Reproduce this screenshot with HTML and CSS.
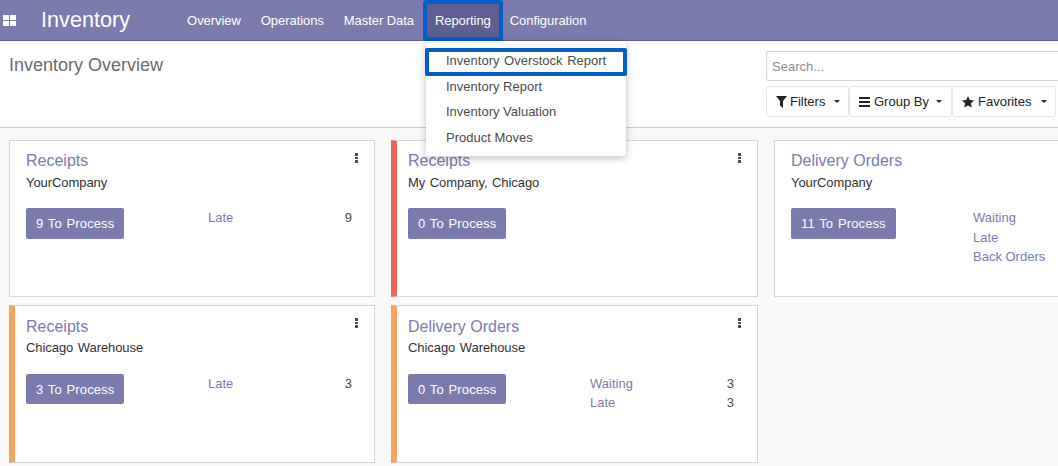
FILE: index.html
```html
<!DOCTYPE html>
<html lang="en">
<head>
  <meta charset="UTF-8">
  <title>Inventory Overview</title>
  <link rel="stylesheet" href="styles.css">
</head>
<body>
  <nav class="navbar">
    <svg class="apps-icon" width="13" height="11" viewBox="0 0 13 11"><path d="M0 0h6v5H0zM7 0h6v5H7zM0 6h6v5H0zM7 6h6v5H7z" fill="#fff"/></svg>
    <span class="brand">Inventory</span>
    <a class="nav-item">Overview</a>
    <a class="nav-item">Operations</a>
    <a class="nav-item">Master Data</a>
    <a class="nav-item nav-active">Reporting</a>
    <a class="nav-item">Configuration</a>
  </nav>

  <!-- Reporting menu -->
  <div class="dropdown">
    <a class="dropdown-item dropdown-marked">Inventory Overstock Report</a>
    <a class="dropdown-item">Inventory Report</a>
    <a class="dropdown-item">Inventory Valuation</a>
    <a class="dropdown-item">Product Moves</a>
  </div>

  <header class="control-panel">
    <h2 class="page-title">Inventory Overview</h2>
    <div class="search-side">
      <input class="search-input" type="text" placeholder="Search...">
      <div class="filter-row">
        <button class="filter-btn filter-filters">
          <svg width="12" height="12" viewBox="0 0 12 12"><path d="M0 0h11L7 5v7L4 9.500V5z" fill="#212529"/></svg>
          Filters <span class="caret"></span>
        </button>
        <button class="filter-btn filter-group">
          <svg width="12" height="10" viewBox="0 0 12 10"><path d="M0 0h11v2H0zM0 4h11v2H0zM0 8h11v2H0z" fill="#212529"/></svg>
          Group By <span class="caret"></span>
        </button>
        <button class="filter-btn filter-favorites">
          <svg width="12" height="12" viewBox="0 0 12 12"><path d="M6 0l1.800 3.900 4.200.5-3.100 2.900.8 4.200L6 9.400 2.300 11.500l.8-4.200L0 4.400l4.200-.5z" fill="#212529"/></svg>
          Favorites <span class="caret"></span>
        </button>
      </div>
    </div>
  </header>

  <main class="dashboard">
    <section class="card">
      <div class="card-head">
        <div class="card-title">Receipts</div>
        <span class="kebab"><i></i><i></i><i></i></span>
      </div>
      <div class="card-sub">YourCompany</div>
      <div class="card-body">
        <button class="process-btn">9 To Process</button>
        <div class="stats">
          <div class="stat"><a>Late</a><span>9</span></div>
        </div>
      </div>
    </section>

    <section class="card card-red">
      <div class="card-head">
        <div class="card-title">Receipts</div>
        <span class="kebab"><i></i><i></i><i></i></span>
      </div>
      <div class="card-sub">My Company, Chicago</div>
      <div class="card-body">
        <button class="process-btn">0 To Process</button>
      </div>
    </section>

    <section class="card">
      <div class="card-head">
        <div class="card-title">Delivery Orders</div>
      </div>
      <div class="card-sub">YourCompany</div>
      <div class="card-body">
        <button class="process-btn">11 To Process</button>
        <div class="stats">
          <div class="stat"><a>Waiting</a></div>
          <div class="stat"><a>Late</a></div>
          <div class="stat"><a>Back Orders</a></div>
        </div>
      </div>
    </section>

    <section class="card card-orange">
      <div class="card-head">
        <div class="card-title">Receipts</div>
        <span class="kebab"><i></i><i></i><i></i></span>
      </div>
      <div class="card-sub">Chicago Warehouse</div>
      <div class="card-body">
        <button class="process-btn">3 To Process</button>
        <div class="stats">
          <div class="stat"><a>Late</a><span>3</span></div>
        </div>
      </div>
    </section>

    <section class="card card-orange">
      <div class="card-head">
        <div class="card-title">Delivery Orders</div>
        <span class="kebab"><i></i><i></i><i></i></span>
      </div>
      <div class="card-sub">Chicago Warehouse</div>
      <div class="card-body">
        <button class="process-btn">0 To Process</button>
        <div class="stats">
          <div class="stat"><a>Waiting</a><span>3</span></div>
          <div class="stat"><a>Late</a><span>3</span></div>
        </div>
      </div>
    </section>
  </main>
</body>
</html>
```

FILE: styles.css
```css
html, body {
  margin: 0;
  height: 466px;
  overflow: hidden;
}
body {
  position: relative;
  font-family: "Liberation Sans", Arial, sans-serif;
  font-size: 13px;
  color: #4c4c4c;
  background-color: #f9f9f9;
}

/* navbar */
.navbar {
  display: flex;
  align-items: center;
  height: 40px;
  background-color: #7c7bad;
  border-bottom: 1px solid #5e5e8f;
  color: #fff;
}
.apps-icon {
  margin-left: 3px;
}
.brand {
  margin-left: 25px;
  margin-right: 47px;
  font-size: 21.670px;
}
.nav-item {
  display: flex;
  align-items: center;
  height: 40px;
  padding: 0 10px;
  letter-spacing: -0.06px;
  box-sizing: border-box;
}
.nav-active {
  height: 39px;
  margin-top: 1px;
  margin-right: -2px;
  padding: 0 11px 1px;
  background-color: #5f5e91;
  outline: 4px solid #0060c8;
  outline-offset: -3px;
  border-radius: 2px;
}

/* dropdown */
.dropdown {
  position: absolute;
  top: 41px;
  left: 426px;
  width: 200px;
  height: 115px;
  padding-top: 7px;
  box-sizing: border-box;
  background-color: #fff;
  border-radius: 3px;
  box-shadow: 0 2px 8px rgba(0, 0, 0, 0.25);
  z-index: 10;
}
.dropdown-item {
  display: flex;
  align-items: center;
  height: 25.500px;
  padding-left: 20px;
  box-sizing: border-box;
}
.dropdown-marked {
  position: relative;
  word-spacing: 1px;
}
.dropdown-marked::after {
  content: "";
  position: absolute;
  top: 0;
  left: -1px;
  right: -1px;
  height: 20px;
  border: 4px solid #0060c8;
  border-radius: 2px;
}

/* control panel */
.control-panel {
  display: flex;
  justify-content: space-between;
  height: 86px;
  background-color: #fff;
  border-bottom: 1px solid #ccc;
}
.page-title {
  margin: 14px 0 0 9px;
  font-size: 18px;
  font-weight: 400;
  color: #6b6b6b;
}
.search-side {
  width: 292px;
  padding-top: 10px;
}
.search-input {
  display: block;
  width: 100%;
  height: 30px;
  padding: 0 5px;
  box-sizing: border-box;
  border: 1px solid #ced4da;
  border-right: none;
  border-radius: 3px 0 0 3px;
  font-family: inherit;
  font-size: 13px;
}
.search-input::placeholder {
  color: #8f8f8f;
}
.filter-row {
  display: flex;
  margin-top: 5px;
}
.filter-btn {
  display: flex;
  align-items: center;
  gap: 3px;
  height: 31px;
  padding: 0 0 0 9px;
  box-sizing: border-box;
  background-color: #fff;
  border: 1px solid #e4e7ea;
  border-radius: 3px;
  font-family: inherit;
  font-size: 13px;
  color: #212529;
}
.filter-filters { width: 83px; gap: 2px; }
.filter-group { width: 103px; }
.filter-favorites { width: 104px; gap: 4px; }
.caret {
  margin-left: 6px;
  border-top: 3px solid #212529;
  border-left: 3px solid transparent;
  border-right: 3px solid transparent;
}
.filter-filters .caret { margin-left: 7px; }
.filter-group .caret { margin-left: 4px; }

/* cards */
.dashboard {
  display: grid;
  grid-template-columns: 366px 367px 366px;
  grid-auto-rows: 157.400px;
  gap: 8px 16px;
  padding: 12px 0 0 9px;
}
.card {
  padding: 10px 16px 0;
  box-sizing: border-box;
  background-color: #fff;
  border: 1px solid #d0d4de;
}
.card-red {
  border-left: 6px solid #f0655a;
  padding-left: 11px;
}
.card-orange {
  border-left: 6px solid #f4a460;
  padding: 11px 16px 0 11px;
}
.card-head {
  display: flex;
  justify-content: space-between;
}
.card-title {
  font-size: 16px;
  line-height: 20px;
  color: #7c7bad;
}
.kebab {
  display: flex;
  flex-direction: column;
  gap: 1px;
  margin-top: 2px;
}
.card-orange .kebab {
  margin-top: 1px;
}
.kebab i {
  width: 3px;
  height: 2.500px;
  background-color: #4c4c4c;
}
.card-sub {
  margin-top: 4px;
  line-height: 16px;
  word-spacing: 1px;
  letter-spacing: -0.07px;
  color: #333;
}
.card-orange .card-sub {
  margin-top: 3px;
}
.card-body {
  display: flex;
  margin-top: 17px;
}
.card-orange .card-body {
  margin-top: 18px;
}
.process-btn {
  height: 31px;
  padding: 0 10px;
  background-color: #7c7bad;
  border: none;
  border-radius: 2px;
  color: #fff;
  font-family: inherit;
  font-size: 13px;
  word-spacing: 1px;
  letter-spacing: 0.12px;
}
.card-orange .process-btn {
  height: 30px;
}
.stats {
  position: absolute;
  margin-left: 182px;
  width: 144px;
}
.stat {
  display: flex;
  justify-content: space-between;
  height: 19.500px;
  line-height: 19px;
}
.card-orange .stat {
  height: 19px;
}
.stat a {
  color: #7c7bad;
}
.stat span {
  color: #4c4c4c;
}
```
